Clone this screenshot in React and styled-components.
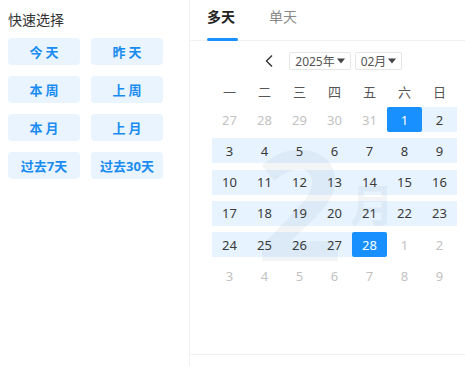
import React from "react";
import styled, { createGlobalStyle } from "styled-components";

const Global = createGlobalStyle`
  html, body { margin: 0; padding: 0; background: #fff; }
  body { font-family: "Noto Sans", "Noto Sans CJK SC", sans-serif; }
  * { box-sizing: border-box; }
`;

const Page = styled.div`
  display: flex;
  width: 465px;
  height: 366px;
  overflow: hidden;
`;

const Side = styled.div`
  width: 190px;
  border-right: 1px solid #f2f2f2;
  padding: 10px 8px;
`;

const SideTitle = styled.div`
  font-size: 14px;
  line-height: 20px;
  color: #333;
`;

const QuickGrid = styled.div`
  display: grid;
  grid-template-columns: 72px 72px;
  column-gap: 11px;
  row-gap: 11px;
  margin-top: 8px;
`;

const QuickBtn = styled.div`
  height: 27px;
  border-radius: 4px;
  background: #e9f4ff;
  color: #1a8cf0;
  font-weight: 700;
  font-size: 13px;
  display: flex;
  align-items: center;
  justify-content: center;
  letter-spacing: ${(p) => (p.$spaced ? "3px" : "0")};
  text-indent: ${(p) => (p.$spaced ? "3px" : "0")};
`;

const Main = styled.div`
  flex: 1;
  display: flex;
  flex-direction: column;
`;

const Tabs = styled.div`
  height: 41px;
  border-bottom: 1px solid #f2f2f2;
  display: flex;
  padding-left: 17px;
  gap: 31px;
`;

const Tab = styled.div`
  position: relative;
  font-size: 14px;
  line-height: 20px;
  padding-top: 7px;
  width: 31px;
  color: ${(p) => (p.$active ? "#222" : "#888")};
  font-weight: ${(p) => (p.$active ? 700 : 400)};
  &::after {
    content: "";
    display: ${(p) => (p.$active ? "block" : "none")};
    position: absolute;
    left: 0;
    bottom: -1px;
    width: 31px;
    height: 3px;
    border-radius: 2px;
    background: #1890ff;
  }
`;

const Body = styled.div`
  flex: 1;
  position: relative;
  border-bottom: 1px solid #f2f2f2;
  margin-bottom: 11px;
`;

const Nav = styled.div`
  display: flex;
  align-items: center;
  padding-left: 74px;
  margin-top: 11px;
  height: 18px;
`;

const Chevron = styled.svg`
  width: 10px;
  height: 14px;
  margin-right: 15px;
`;

const Select = styled.div`
  height: 18px;
  width: ${(p) => p.$w}px;
  border: 1px solid #e6e6e6;
  border-radius: 2px;
  font-size: 12px;
  color: #555;
  display: flex;
  align-items: center;
  justify-content: center;
  gap: 2px;
  margin-right: 4px;
`;

const Caret = styled.svg`
  width: 8px;
  height: 6px;
`;

const Calendar = styled.div`
  position: relative;
  z-index: 1;
  margin-left: 22px;
  width: 245px;
  margin-top: 11px;
`;

const WeekRow = styled.div`
  display: grid;
  grid-template-columns: repeat(7, 35px);
  height: 20px;
  align-items: center;
  font-size: 13px;
  color: #555;
  text-align: center;
  margin-bottom: 6px;
`;

const DayRows = styled.div`
  display: flex;
  flex-direction: column;
  gap: 6.3px;
`;

const DayRow = styled.div`
  display: grid;
  grid-template-columns: repeat(7, 35px);
  height: 25px;
`;

const Day = styled.div`
  display: flex;
  align-items: center;
  justify-content: center;
  font-size: 13px;
  color: ${(p) => (p.$sel ? "#fff" : p.$muted ? "#c2c2c2" : "#3a3a3a")};
  background: ${(p) =>
    p.$sel ? "#1890ff" : p.$range ? "rgba(24,144,255,0.1)" : "transparent"};
  border-radius: ${(p) => (p.$sel ? "2px" : "0")};
`;

const Mark = styled.div`
  position: absolute;
  left: 66px;
  top: 86px;
  z-index: 0;
  font-size: 152px;
  line-height: 1;
  font-weight: 700;
  color: rgba(225, 228, 232, 0.4);
  pointer-events: none;
`;

const MarkSub = styled.div`
  position: absolute;
  left: 160px;
  top: 142px;
  z-index: 0;
  font-size: 44px;
  line-height: 1;
  font-weight: 700;
  color: rgba(225, 228, 232, 0.4);
  pointer-events: none;
`;

const quick = [
  { t: "今天", s: true },
  { t: "昨天", s: true },
  { t: "本周", s: true },
  { t: "上周", s: true },
  { t: "本月", s: true },
  { t: "上月", s: true },
  { t: "过去7天" },
  { t: "过去30天" },
];

const weeks = ["一", "二", "三", "四", "五", "六", "日"];

function buildDays() {
  const cells = [];
  [27, 28, 29, 30, 31].forEach((d) => cells.push({ d, muted: true }));
  for (let d = 1; d <= 28; d++) cells.push({ d, range: true, sel: d === 1 || d === 28 });
  for (let d = 1; d <= 9; d++) cells.push({ d, muted: true });
  const rows = [];
  for (let i = 0; i < cells.length; i += 7) rows.push(cells.slice(i, i + 7));
  return rows;
}

export default function App() {
  const rows = buildDays();
  return (
    <Page>
      <Global />
      <Side>
        <SideTitle>快速选择</SideTitle>
        <QuickGrid>
          {quick.map((q) => (
            <QuickBtn key={q.t} $spaced={q.s}>
              {q.t}
            </QuickBtn>
          ))}
        </QuickGrid>
      </Side>
      <Main>
        <Tabs>
          <Tab $active>多天</Tab>
          <Tab>单天</Tab>
        </Tabs>
        <Body>
          <Mark>2</Mark>
          <MarkSub>月</MarkSub>
          <Nav>
            <Chevron viewBox="0 0 10 14">
              <polyline points="8,1.5 2.5,7 8,12.5" fill="none" stroke="#333" strokeWidth="1.4" />
            </Chevron>
            <Select $w={62}>
              2025年
              <Caret viewBox="0 0 8 6">
                <polygon points="0,0.5 8,0.5 4,5.5" fill="#444" />
              </Caret>
            </Select>
            <Select $w={47}>
              02月
              <Caret viewBox="0 0 8 6">
                <polygon points="0,0.5 8,0.5 4,5.5" fill="#444" />
              </Caret>
            </Select>
          </Nav>
          <Calendar>
            <WeekRow>
              {weeks.map((w) => (
                <div key={w}>{w}</div>
              ))}
            </WeekRow>
            <DayRows>
              {rows.map((r, i) => (
                <DayRow key={i}>
                  {r.map((c, j) => (
                    <Day key={j} $muted={c.muted} $range={c.range} $sel={c.sel}>
                      {c.d}
                    </Day>
                  ))}
                </DayRow>
              ))}
            </DayRows>
          </Calendar>
        </Body>
      </Main>
    </Page>
  );
}
